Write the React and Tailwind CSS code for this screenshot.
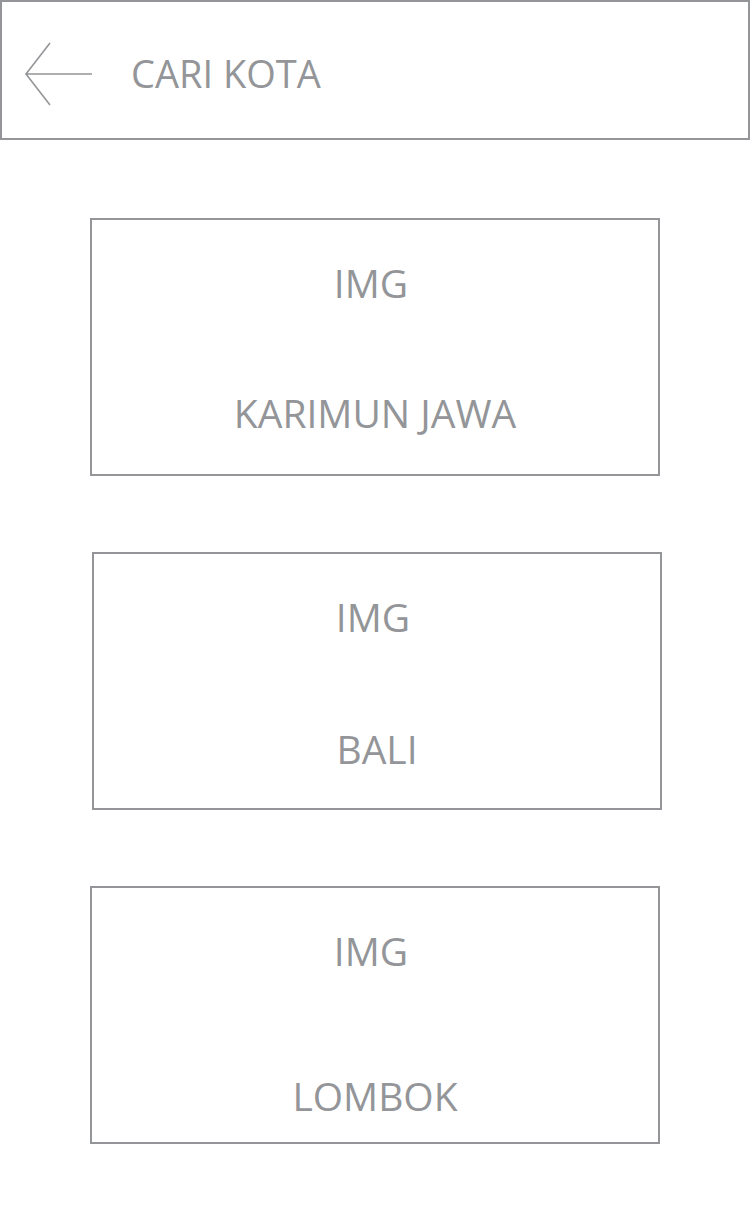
import React from "react";

const cities = [
  { name: "KARIMUN JAWA", shift: "ml-0", gap: "mt-[91px]" },
  { name: "BALI", shift: "ml-[2px]", gap: "mt-[93px]" },
  { name: "LOMBOK", shift: "ml-0", gap: "mt-[106px]" },
];

const BackArrow = () => (
  <svg width="70" height="66" viewBox="0 0 70 66" fill="none" className="mt-[39px] shrink-0">
    <path d="M2 33 H68 M26 2 L2 33 L26 64" stroke="#939598" strokeWidth="1.6" />
  </svg>
);

const CityCard = ({ city }) => (
  <div
    className={`${city.shift} h-[258px] w-[570px] border-2 border-[#939598] pt-[43px] text-center`}
  >
    <div className="pr-[8px] text-[39px] leading-none">IMG</div>
    <div className={`${city.gap} text-[39px] leading-none`}>{city.name}</div>
  </div>
);

export default function App() {
  return (
    <div
      className="min-h-[1208px] w-[750px] bg-white text-[#939598]"
      style={{ fontFamily: '"Open Sans", "Noto Sans", sans-serif' }}
    >
      <header className="flex h-[140px] items-start border-2 border-[#939598] pl-[22px]">
        <BackArrow />
        <h1 className="ml-[37px] mt-[52px] text-[38px] leading-none">CARI KOTA</h1>
      </header>

      <main className="flex flex-col gap-[76px] pl-[90px] pt-[78px]">
        {cities.map((c) => (
          <CityCard key={c.name} city={c} />
        ))}
      </main>
    </div>
  );
}
